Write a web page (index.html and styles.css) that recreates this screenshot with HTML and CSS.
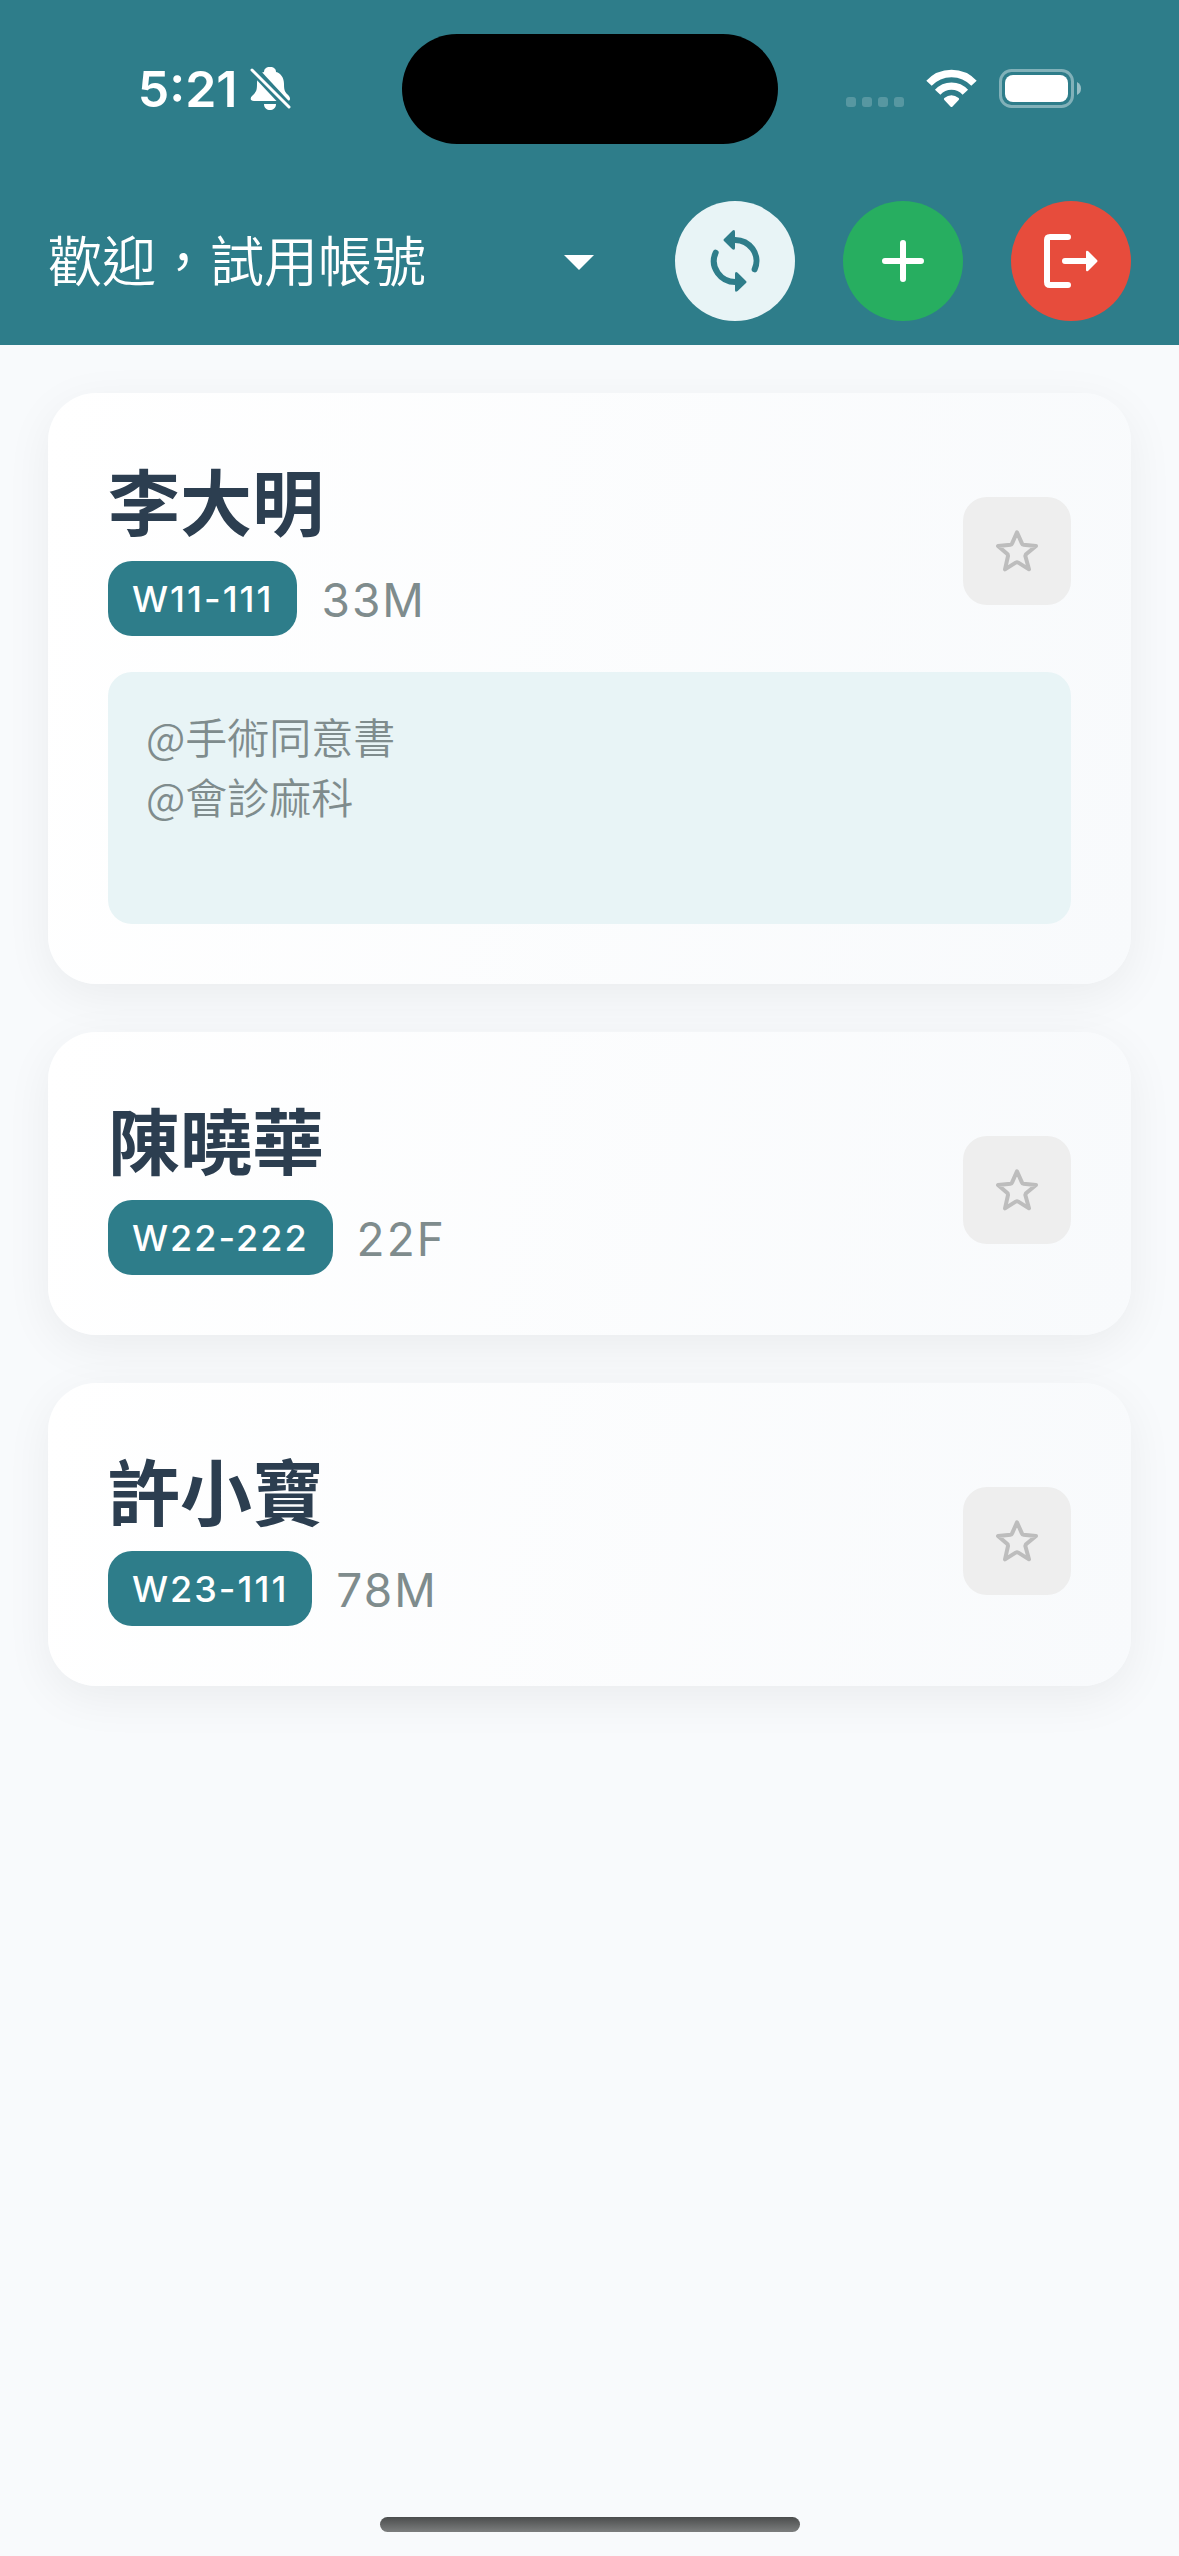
FILE: index.html
```html
<!DOCTYPE html>
<html lang="zh-Hant">
<head>
<meta charset="utf-8">
<meta name="viewport" content="width=device-width, initial-scale=1">
<title>病人清單</title>
<link rel="stylesheet" href="styles.css">
</head>
<body>
<svg class="sprite" aria-hidden="true">
  <symbol id="star" viewBox="279 440 144 144">
    <path d="M351 456L366 490Q367 493 370 493L408 497L378 522L376 527L387 567L355 547Q351 545 347 547L315 567L324 527L323 522L294 497L332 493Q335 493 336 490Z" fill="none" stroke="currentColor" stroke-width="12" stroke-linejoin="round"/>
  </symbol>
</svg>
<div class="screen">
  <header class="top">
    <div class="status">
      <div class="status-left">
        <span class="clock">5:21</span>
        <svg class="bell" viewBox="250 66 42 45" aria-hidden="true">
          <path d="M270 67C274 67 276 69 276 72C281 73 284 78 284 84C284 91 285 92 289 96C291 99 290 101 287 101H254C250 101 250 98 252 96C256 92 257 91 257 84C257 78 259 73 264 72C264 69 266 67 270 67ZM264 104H276C276 108 273 110 270 110S264 108 264 104Z" fill="#fff"/>
          <path d="M250 66L292 111" stroke="#2e7d8a" stroke-width="9"/>
          <path d="M252 70L289 107" stroke="#fff" stroke-width="3" stroke-linecap="round"/>
        </svg>
      </div>
      <div class="island"></div>
      <div class="status-right">
        <svg class="signal" viewBox="0 0 58 40" aria-hidden="true">
          <g fill="#fff" fill-opacity=".2"><rect y="28" width="10" height="10" rx="3"/><rect x="16" y="28" width="10" height="10" rx="3"/><rect x="32" y="28" width="10" height="10" rx="3"/><rect x="48" y="28" width="10" height="10" rx="3"/></g>
        </svg>
        <svg class="wifi" viewBox="318 84 153 120" aria-hidden="true">
          <path d="M327 127A92 92 0 0 1 462 127M353 154A56 56 0 0 1 436 154" fill="none" stroke="#fff" stroke-width="22"/>
          <path d="M373 177Q370 174 373 171Q394 155 416 171Q419 174 416 177L397 197Q394 199 392 197Z" fill="#fff"/>
        </svg>
        <svg class="battery" viewBox="0 0 82 40" aria-hidden="true">
          <rect x="1.5" y="1.5" width="72" height="36" rx="11" fill="none" stroke="#fff" stroke-opacity=".4" stroke-width="3"/>
          <rect x="6" y="6" width="63" height="27" rx="8" fill="#fff"/>
          <path d="M78 13Q82 15 82 19.5T78 26Z" fill="#fff" fill-opacity=".5"/>
        </svg>
      </div>
    </div>
    <div class="toolbar">
      <div class="account">
        <select class="account-select" aria-label="帳號"><option>歡迎，試用帳號</option></select>
        <svg class="account-arrow" viewBox="0 0 72 72" aria-hidden="true"><path d="M21 30H51L36 45Z" fill="#fff"/></svg>
      </div>
      <button class="round sync" type="button" aria-label="同步">
        <svg viewBox="45 33 360 360" aria-hidden="true">
          <path d="M284 238A65 63 0 0 0 220 150M167 188A65 63 0 0 0 230 276" fill="none" stroke="currentColor" stroke-width="18" stroke-linecap="round"/>
          <path d="M192 147L217 122Q225 117 225 126V174Q225 182 217 178L192 153Q189 150 192 147ZM258 279L233 303Q225 309 225 300V252Q225 243 233 248L258 273Q261 276 258 279Z" fill="currentColor"/>
        </svg>
      </button>
      <button class="round add" type="button" aria-label="新增">
        <svg viewBox="0 0 120 120" aria-hidden="true"><path d="M60 42V78M42 60H78" stroke="currentColor" stroke-width="6" stroke-linecap="round"/></svg>
      </button>
      <button class="round logout" type="button" aria-label="登出">
        <svg viewBox="0 0 120 120" aria-hidden="true">
          <path d="M57 36H39Q36 36 36 39V81Q36 84 39 84H57M54 60H78" fill="none" stroke="currentColor" stroke-width="6" stroke-linecap="round"/>
          <path d="M75 51Q75 49 77 50L86 59Q87 60 86 61L77 70Q75 71 75 69Z" fill="currentColor"/>
        </svg>
      </button>
    </div>
  </header>

  <main class="list">
    <article class="card">
      <div class="card-head">
        <div class="info">
          <h2 class="name">李大明</h2>
          <div class="meta"><span class="bed">W11-111</span><span class="age">33M</span></div>
        </div>
        <button class="fav" type="button" aria-label="標記李大明"><svg><use href="#star"/></svg></button>
      </div>
      <p class="note">@手術同意書<br>@會診麻科</p>
    </article>
    <article class="card">
      <div class="card-head">
        <div class="info">
          <h2 class="name">陳曉華</h2>
          <div class="meta"><span class="bed">W22-222</span><span class="age">22F</span></div>
        </div>
        <button class="fav" type="button" aria-label="標記陳曉華"><svg><use href="#star"/></svg></button>
      </div>
    </article>
    <article class="card">
      <div class="card-head">
        <div class="info">
          <h2 class="name">許小寶</h2>
          <div class="meta"><span class="bed">W23-111</span><span class="age">78M</span></div>
        </div>
        <button class="fav" type="button" aria-label="標記許小寶"><svg><use href="#star"/></svg></button>
      </div>
    </article>
  </main>
  <div class="home-bar"></div>
</div>
</body>
</html>
```

FILE: styles.css
```css
* {
  box-sizing: border-box;
}

body {
  margin: 0;
  background: #f8fafc;
  font-family: Inter, "Noto Sans CJK TC", sans-serif;
}

button,
select {
  border: 0;
  padding: 0;
  font: inherit;
}

svg {
  display: block;
}

.sprite {
  display: none;
}

.screen {
  display: flex;
  flex-direction: column;
  min-height: 100vh;
}

/* Status bar and toolbar */
.top {
  background: #2e7d8a;
  color: #fff;
}

.status {
  display: grid;
  grid-template-columns: 1fr 376px 1fr;
  align-items: center;
  height: 177px;
}

.status-left {
  display: flex;
  align-items: center;
  justify-content: flex-end;
  gap: 12px;
  padding-right: 110px;
}

.clock {
  font-size: 50px;
  font-weight: 600;
  line-height: 60px;
}

.bell {
  width: 42px;
  height: 45px;
}

.island {
  height: 110px;
  border-radius: 55px;
  background: #000;
}

.status-right {
  display: flex;
  align-items: center;
  gap: 22px;
  padding-left: 68px;
}

.signal {
  width: 58px;
  height: 40px;
}

.wifi {
  width: 51px;
  height: 40px;
}

.battery {
  width: 82px;
  height: 40px;
}

.toolbar {
  display: flex;
  align-items: center;
  gap: 48px;
  height: 168px;
  padding: 0 48px;
}

.account {
  display: grid;
  flex: 1;
  align-items: center;
  margin-right: 12px;
}

.account-select {
  grid-area: 1 / 1;
  width: 100%;
  padding-top: 4px;
  appearance: none;
  background: none;
  color: #fff;
  font-size: 54px;
  font-weight: 350;
  line-height: 80px;
}

.account-arrow {
  grid-area: 1 / 1;
  justify-self: end;
  width: 72px;
  height: 72px;
  pointer-events: none;
}

.round {
  width: 120px;
  height: 120px;
  border-radius: 50%;
}

.sync {
  background: #e8f4f6;
  color: #2e7d8a;
}

.add {
  background: #27ae60;
  color: #fff;
}

.logout {
  background: #e74c3c;
  color: #fff;
}

/* Patient cards */
.list {
  display: grid;
  gap: 48px;
  padding: 48px;
}

.card {
  padding: 60px;
  border-radius: 48px;
  background: linear-gradient(100deg, #fff, #f8fafc);
  box-shadow: 0 12px 48px rgba(0, 0, 0, 0.06);
}

.card-head {
  display: flex;
  align-items: center;
  justify-content: space-between;
}

.name {
  margin: 0 0 6px;
  color: #2c3e50;
  font-size: 72px;
  font-weight: 600;
  line-height: 102px;
}

.meta {
  display: flex;
  align-items: center;
  gap: 24px;
}

.bed {
  padding: 13px 24px 11px;
  border-radius: 24px;
  background: #2e7d8a;
  color: #fff;
  font-size: 36px;
  font-weight: 500;
  line-height: 51px;
  letter-spacing: 2px;
}

.age {
  padding-top: 2px;
  color: #7f8c8d;
  font-size: 46px;
  font-weight: 400;
  line-height: 60px;
  letter-spacing: 2px;
}

.fav {
  display: grid;
  place-items: center;
  width: 108px;
  height: 108px;
  margin-top: 12px;
  border-radius: 24px;
  background: #eee;
  color: #bdbdbd;
}

.fav svg {
  width: 48px;
  height: 48px;
}

.note {
  min-height: 252px;
  margin: 36px 0 0;
  padding: 34px 38px;
  border-radius: 24px;
  background: #e8f4f6;
  color: #7f8c8d;
  font-family: "Noto Sans CJK TC", sans-serif;
  font-size: 42px;
  font-weight: 350;
  line-height: 60px;
}

.home-bar {
  width: 420px;
  height: 15px;
  margin: auto auto 24px;
  border-radius: 8px;
  background: linear-gradient(#4b4d4d, #7c7e7e);
}
```
